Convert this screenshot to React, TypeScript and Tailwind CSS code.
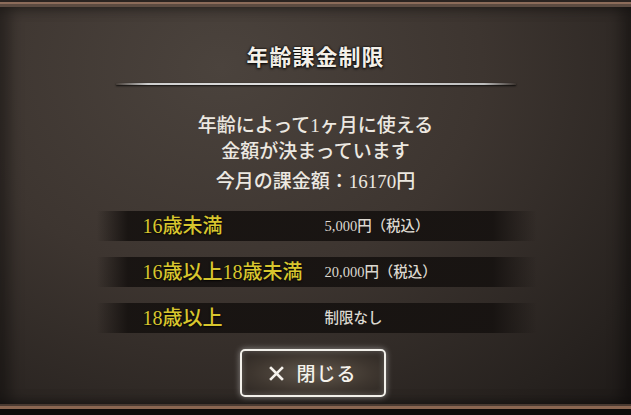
const serif = "font-['Liberation_Serif','Noto_Sans_CJK_JP',serif]";
const sans = "font-['Noto_Sans_CJK_JP','Noto_Sans',sans-serif]";

type Limit = {
  label: string;
  value: string;
};

const limits: Limit[] = [
  { label: '16歳未満', value: '5,000円（税込）' },
  { label: '16歳以上18歳未満', value: '20,000円（税込）' },
  { label: '18歳以上', value: '制限なし' },
];

function LimitRow({ label, value }: Limit) {
  return (
    <div className="flex h-[30px] w-[440px] items-center bg-[linear-gradient(90deg,rgba(22,18,16,0)_0%,rgba(22,18,16,0.92)_7%,rgba(22,18,16,0.92)_90%,rgba(22,18,16,0)_100%)]">
      <span
        className={`${serif} w-[228px] pl-[46px] text-[20px] leading-none font-medium whitespace-nowrap text-[#d8c62e] [text-shadow:0_1px_2px_rgba(0,0,0,0.9)]`}
      >
        {label}
      </span>
      <span className={`${serif} text-[14.5px] leading-none font-medium whitespace-nowrap text-[#dcd8d0]`}>
        {value}
      </span>
    </div>
  );
}

export default function App() {
  return (
    <div className="flex h-[415px] w-[631px] flex-col overflow-hidden bg-[#0d0b0a]">
      {/* top frame */}
      <div className="h-[2px] bg-[#2a2320]" />
      <div className="h-[2px] bg-[#8c6c5a]" />
      <div className="h-[3px] bg-[#5c4b41]" />

      <main className="flex flex-1 flex-col items-center bg-[radial-gradient(ellipse_at_35%_15%,#4b433d_0%,#3d3530_45%,#27221f_85%,#1e1a18_100%)] shadow-[inset_10px_0_14px_rgba(0,0,0,0.35),inset_-10px_0_14px_rgba(0,0,0,0.35)]">
        <h1
          className={`${sans} mt-[33px] text-[22px] leading-[30px] font-bold tracking-[1px] text-[#f3efe8] [text-shadow:0_0_2px_#000,0_1px_3px_#000]`}
        >
          年齢課金制限
        </h1>

        <div className="mt-[13px] h-[2px] w-[400px] bg-[linear-gradient(90deg,rgba(220,220,220,0)_0%,#cfcfcf_8%,#e6e6e6_50%,#bdbdbd_92%,rgba(200,200,200,0)_100%)] shadow-[0_1px_2px_rgba(0,0,0,0.8)]" />

        <div className={`${serif} mt-[28px] text-center text-[19px] leading-[26px] font-medium text-[#ece8e1]`}>
          <p>年齢によって1ヶ月に使える</p>
          <p>金額が決まっています</p>
          <p className="mt-[4px]">今月の課金額：16170円</p>
        </div>

        <div className="mt-[16px] ml-[2px] flex flex-col gap-[16px]">
          {limits.map((limit) => (
            <LimitRow key={limit.label} {...limit} />
          ))}
        </div>

        <button
          className={`${sans} mt-[16px] mr-[5px] flex h-[48px] w-[146px] items-center justify-center gap-[12px] rounded-[5px] border-2 border-[#f2f0ea] bg-[radial-gradient(ellipse_at_center,#61574c_0%,#3e362f_60%,#2c2622_100%)] text-[19px] font-medium text-[#f5f2ec] shadow-[0_0_6px_rgba(255,255,255,0.45),inset_0_0_6px_rgba(255,255,255,0.25)]`}
        >
          <svg width="15" height="15" viewBox="0 0 15 15" className="mt-[1px]">
            <path d="M2 2 L13 13 M13 2 L2 13" stroke="#f5f2ec" strokeWidth="2.6" strokeLinecap="square" />
          </svg>
          <span className="tracking-[1px]">閉じる</span>
        </button>
      </main>

      {/* bottom frame */}
      <div className="h-[2px] bg-[#4a3a31]" />
      <div className="h-[3px] bg-[#8a6651]" />
      <div className="h-[6px] bg-[#0d0b0a]" />
    </div>
  );
}
